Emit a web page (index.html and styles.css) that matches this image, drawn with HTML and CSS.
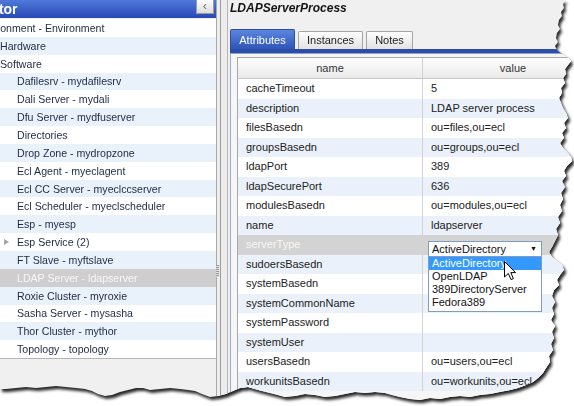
FILE: index.html
```html
<!DOCTYPE html>
<html>
<head>
<meta charset="utf-8">
<link rel="stylesheet" href="styles.css">
</head>
<body>
<div class="sheet">
  <div class="paper">
    <aside class="nav">
      <div class="nav-head">
        <span class="nav-title">Navigator</span>
        <span class="collapse">&#8249;</span>
      </div>
      <ul class="tree">
        <li class="lv0"><span class="label">Environment - Environment</span></li>
        <li class="lv1"><span class="label">Hardware</span></li>
        <li class="lv1"><span class="label">Software</span></li>
        <li class="lv2"><span class="label">Dafilesrv - mydafilesrv</span></li>
        <li class="lv2"><span class="label">Dali Server - mydali</span></li>
        <li class="lv2"><span class="label">Dfu Server - mydfuserver</span></li>
        <li class="lv2"><span class="label">Directories</span></li>
        <li class="lv2"><span class="label">Drop Zone - mydropzone</span></li>
        <li class="lv2"><span class="label">Ecl Agent - myeclagent</span></li>
        <li class="lv2"><span class="label">Ecl CC Server - myeclccserver</span></li>
        <li class="lv2"><span class="label">Ecl Scheduler - myeclscheduler</span></li>
        <li class="lv2"><span class="label">Esp - myesp</span></li>
        <li class="lvx"><span class="exp"></span><span class="label">Esp Service (2)</span></li>
        <li class="lv2"><span class="label">FT Slave - myftslave</span></li>
        <li class="lv2 sel"><span class="label">LDAP Server - ldapserver</span></li>
        <li class="lv2"><span class="label">Roxie Cluster - myroxie</span></li>
        <li class="lv2"><span class="label">Sasha Server - mysasha</span></li>
        <li class="lv2"><span class="label">Thor Cluster - mythor</span></li>
        <li class="lv2"><span class="label">Topology - topology</span></li>
      </ul>
    </aside>
    <div class="splitter"><span class="grip"></span></div>
    <main class="detail">
      <h1 class="title">LDAPServerProcess</h1>
      <div class="tabs">
        <span class="tab active">Attributes</span>
        <span class="tab tab-inst">Instances</span>
        <span class="tab tab-notes">Notes</span>
      </div>
      <div class="tabbar"></div>
      <div class="pane">
        <div class="grid">
          <div class="grow ghead"><span class="c1">name</span><span class="c2">value</span></div>
          <div class="rows">
            <div class="grow"><span class="c1">cacheTimeout</span><span class="c2">5</span></div>
            <div class="grow"><span class="c1">description</span><span class="c2">LDAP server process</span></div>
            <div class="grow"><span class="c1">filesBasedn</span><span class="c2">ou=files,ou=ecl</span></div>
            <div class="grow"><span class="c1">groupsBasedn</span><span class="c2">ou=groups,ou=ecl</span></div>
            <div class="grow"><span class="c1">ldapPort</span><span class="c2">389</span></div>
            <div class="grow"><span class="c1">ldapSecurePort</span><span class="c2">636</span></div>
            <div class="grow"><span class="c1">modulesBasedn</span><span class="c2">ou=modules,ou=ecl</span></div>
            <div class="grow"><span class="c1">name</span><span class="c2">ldapserver</span></div>
            <div class="grow sel"><span class="c1">serverType</span>
              <span class="c2 editcell">
                <span class="select"><span>ActiveDirectory</span><span class="arrow">&#9660;</span></span>
                <span class="dropdown">
                  <span class="opt hl">ActiveDirectory</span>
                  <span class="opt">OpenLDAP</span>
                  <span class="opt">389DirectoryServer</span>
                  <span class="opt">Fedora389</span>
                </span>
                <svg class="cursor" width="13" height="20" viewBox="0 0 13 20"><path d="M0.5 0.5 L0.5 16 L4.3 12.4 L7 18.6 L9.4 17.6 L6.8 11.6 L11.6 11.6 Z" fill="#fff" stroke="#000" stroke-width="1" stroke-linejoin="round"/></svg>
              </span>
            </div>
            <div class="grow"><span class="c1">sudoersBasedn</span><span class="c2"></span></div>
            <div class="grow"><span class="c1">systemBasedn</span><span class="c2"></span></div>
            <div class="grow"><span class="c1">systemCommonName</span><span class="c2"></span></div>
            <div class="grow"><span class="c1">systemPassword</span><span class="c2"></span></div>
            <div class="grow"><span class="c1">systemUser</span><span class="c2"></span></div>
            <div class="grow"><span class="c1">usersBasedn</span><span class="c2">ou=users,ou=ecl</span></div>
            <div class="grow"><span class="c1">workunitsBasedn</span><span class="c2">ou=workunits,ou=ecl</span></div>
          </div>
        </div>
      </div>
    </main>
  </div>
</div>
</body>
</html>
```
FILE: styles.css
```css
* { box-sizing: border-box; margin: 0; padding: 0; }
html, body { width: 574px; height: 406px; overflow: hidden; background: #fff; }
body { font-family: "Liberation Sans", Arial, sans-serif; color: #222; }

.sheet {
  width: 574px; height: 406px;
  filter: drop-shadow(2px 3px 1.6px rgba(0,0,0,0.85));
}
.paper {
  width: 574px; height: 406px;
  background: #f0f0f0;
  display: flex;
  clip-path: polygon(
    0px 0px, 565px 0px, 563px 4px, 564px 8px, 561px 12px, 562px 16px, 559px 20px, 558px 25px, 560px 29px, 557px 33px, 556px 38px, 558px 42px, 555px 46px, 557px 50px, 562px 54px, 567px 57px, 571px 61px, 568px 65px, 565px 69px, 566px 74px, 563px 78px, 565px 83px, 561px 88px, 562px 93px, 559px 98px, 561px 103px, 563px 108px, 566px 113px, 568px 118px, 564px 123px, 566px 128px, 562px 133px, 564px 138px, 560px 143px, 563px 148px, 567px 152px, 571px 157px, 572px 161px, 567px 166px, 564px 171px, 566px 176px, 562px 181px, 565px 187px, 561px 193px, 563px 199px, 560px 205px, 562px 211px, 558px 217px, 560px 223px, 556px 229px, 558px 235px, 555px 241px, 552px 247px, 549px 252px, 552px 257px, 557px 261px, 562px 265px, 564px 270px, 560px 275px, 557px 280px, 559px 285px, 554px 290px, 552px 296px, 555px 302px, 552px 308px, 554px 314px, 551px 320px, 555px 326px, 552px 332px, 554px 338px, 551px 344px, 553px 350px, 549px 356px, 550px 362px, 546px 368px, 543px 373px, 538px 378px, 533px 382px,
    526px 385px, 518px 388px, 510px 390px, 500px 392px, 490px 394px, 480px 395px, 470px 397px, 460px 396px, 450px 397px, 440px 399px, 430px 398px, 420px 400px, 410px 399px, 400px 397px, 392px 395px, 385px 393px, 375px 392px, 365px 393px, 355px 392px, 345px 394px, 335px 396px, 325px 397px, 315px 395px, 305px 394px, 295px 396px, 285px 397px, 278px 395px, 270px 393px, 262px 391px, 255px 389px, 248px 387px, 240px 388px, 233px 391px, 226px 394px, 218px 396px, 210px 397px, 202px 394px, 195px 391px, 188px 390px, 180px 389px, 170px 388px, 160px 389px, 150px 390px, 143px 388px, 136px 388px, 128px 390px, 120px 392px, 112px 395px, 105px 396px, 98px 394px, 92px 391px, 85px 389px, 76px 388px, 66px 387px, 56px 386px, 46px 387px, 36px 388px, 26px 387px, 16px 388px, 6px 389px, 0px 389px
  );
}

/* ---------- navigator ---------- */
.nav { width: 216px; flex: none; display: flex; flex-direction: column; }
.nav-head {
  height: 18px;
  background: linear-gradient(#5079dc, #2748b4);
  display: flex; justify-content: space-between; align-items: flex-start;
  overflow: hidden;
}
.nav-title {
  color: #fff; font-weight: bold; font-size: 14px; line-height: 18px;
  margin-left: -47px; white-space: nowrap;
}
.collapse {
  width: 18px; height: 14px; margin-right: 2px;
  background: linear-gradient(#ffffff, #dcdcdc);
  border: 1px solid #9c9c9c; border-top: none;
  color: #777; font-size: 13px; line-height: 12px; text-align: center;
}
.tree {
  list-style: none; margin-top: 1px;
  background: #fff; border-bottom: 1px solid #b4b4b4;
  font-size: 10.6px; color: #1e2a44;
}
.tree li {
  height: 17.85px; display: flex; align-items: center;
  white-space: nowrap; overflow: hidden;
}
.tree li:nth-child(even) { background: #e9f1fb; }
.tree li.sel { background: #cecece; color: #f7f7f7; }
.lv0 .label { margin-left: -24px; }
.lv1 .label { margin-left: 0; }
.lv2 { padding-left: 17px; }
.exp {
  width: 0; height: 0; margin-left: 4px; margin-right: 8px;
  border-left: 5px solid #a3a3a3;
  border-top: 3.5px solid transparent; border-bottom: 3.5px solid transparent;
}

/* ---------- splitter ---------- */
.splitter {
  width: 12px; flex: none;
  border-left: 1px solid #a8a8a8;
  background: linear-gradient(to right, #ededed 0 3px, #9c9c9c 3px 4px, #ededed 4px 10px, #b6b6b6 10px 11px);
  display: flex; flex-direction: column;
}
.grip {
  width: 3px; height: 12px; margin-top: 265px; margin-left: -1px;
  background: repeating-linear-gradient(#9a9a9a 0 1px, #dedede 1px 2px);
}

/* ---------- detail ---------- */
.detail { flex: 1; min-width: 0; overflow: hidden; padding-left: 2px; display: flex; flex-direction: column; }
.title {
  font-size: 12px; font-weight: bold; font-style: italic; line-height: 16px; color: #141414;
}
.tabs { display: flex; gap: 3px; align-items: flex-end; height: 20px; margin-top: 13px; }
.tab {
  height: 18px; width: 65px; text-align: center;
  font-size: 11px; line-height: 17px; color: #222;
  background: linear-gradient(#fefefe, #e2e2e2);
  border: 1px solid #a4a4a4; border-bottom: none;
  border-radius: 2px 2px 0 0;
}
.tab.active {
  height: 20px; line-height: 20px; color: #fff;
  background: linear-gradient(#5b86de, #2f55b8);
  border-color: #2d4d9f;
}
.tab-notes { width: 47px; }
.tabbar { height: 5px; background: #2c4ea6; border-bottom: 1px solid #8aa2d6; flex: none; }
.pane {
  flex: 1; border-left: 1px solid #9cadcc; background: #f6f6f6;
  padding: 3px 0 0 6px; overflow: hidden;
}
.grid {
  width: 366px; background: #fff;
  border-left: 1px solid #a8a8a8; border-top: 1px solid #a8a8a8;
  font-size: 11px; color: #222;
}
.grow { display: grid; grid-template-columns: 185px 180px; height: 19.5px; }
.grow .c1 { border-right: 1px solid #d2d2d2; padding-left: 8px; line-height: 19.5px; white-space: nowrap; }
.grow .c2 { padding-left: 8px; line-height: 19.5px; white-space: nowrap; }
.ghead {
  height: 21px; border-bottom: 1px solid #c6c6c6;
  background: linear-gradient(#fdfdfd, #ebebeb); color: #333;
}
.ghead .c1, .ghead .c2 { text-align: center; padding-left: 0; line-height: 20px; }
.rows .grow:nth-child(even) { background: #eaf1fb; }
.rows .grow.sel { background: #d3d3d3; color: #f6f6f6; }

.editcell { position: relative; padding-left: 5px !important; }
.select {
  position: absolute; left: 5px; top: 6px;
  width: 114px; height: 16px;
  background: #fff; border: 1px solid #7f9dc4;
  display: flex; justify-content: space-between; align-items: center;
  padding: 0 4px 0 3px; color: #111; font-size: 11px; line-height: 14px;
}
.arrow { font-size: 7px; color: #111; }
.dropdown {
  position: absolute; left: 5px; top: 21px; width: 114px;
  background: #fff; border: 1px solid #7f9dc4;
  display: flex; flex-direction: column; padding-bottom: 2px;
  z-index: 2;
}
.opt { height: 13px; line-height: 13px; padding-left: 3px; font-size: 11px; color: #111; }
.opt.hl { background: #3399ff; color: #fff; }
.cursor { position: absolute; left: 81px; top: 26px; z-index: 3; }
```
